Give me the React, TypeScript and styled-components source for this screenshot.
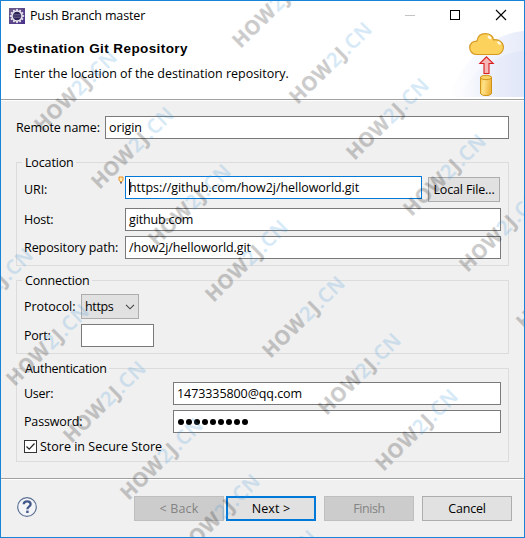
import React from 'react';
import styled, { createGlobalStyle } from 'styled-components';

const GlobalStyle = createGlobalStyle`
  * { box-sizing: border-box; }
  body { margin: 0; overflow: hidden; }
`;

const Dialog = styled.div`
  position: relative;
  display: flex;
  flex-direction: column;
  width: 525px;
  height: 538px;
  overflow: hidden;
  border: 1px solid #1883d7;
  background: #f0f0f0;
  color: #000;
  font: 12.5px/17px 'Open Sans', sans-serif;
`;

const Text = styled.span<{ $ls?: number }>`
  letter-spacing: ${(p) => p.$ls ?? -0.08}px;
  white-space: nowrap;
`;

const TitleBar = styled.header`
  display: flex;
  align-items: center;
  height: 29px;
  padding-left: 8px;
  background: #fff;
`;

const TitleText = styled(Text)`
  flex: 1;
  margin-left: 5px;
`;

const WindowControls = styled.div`
  display: flex;
  width: 138px;
  height: 29px;
`;

const Banner = styled.div`
  display: flex;
  justify-content: space-between;
  height: 70px;
  background: #fff;
  border-bottom: 1px solid #a0a0a0;
  box-shadow: 0 1px 0 #fff;
`;

const BannerCopy = styled.div`
  padding: 10px 0 0 6px;
`;

const BannerTitle = styled.h1`
  margin: 0;
  font: bold 13.5px/17px 'Liberation Sans', sans-serif;
  letter-spacing: 0.41px;
  white-space: nowrap;
`;

const BannerHint = styled.p`
  margin: 8px 0 0 7px;
`;

const Body = styled.main`
  display: flex;
  flex-direction: column;
  height: 379px;
  padding: 16px 15px 0;
`;

const RemoteRow = styled.div`
  display: grid;
  grid-template-columns: 89px 1fr;
  align-items: center;
`;

const Group = styled.fieldset<{ $top: number; $height: number }>`
  display: flex;
  flex-direction: column;
  gap: 5px;
  min-width: 0;
  margin: ${(p) => p.$top}px 0 0;
  height: ${(p) => p.$height}px;
  padding: 5px 7px 0;
  border: 1px solid #dcdcdc;
`;

const Legend = styled.legend`
  height: 17px;
  margin-left: -2px;
  padding: 0 2px 0 3px;
`;

const Row = styled.div<{ $label: number; $top?: number }>`
  display: grid;
  grid-template-columns: ${(p) => p.$label}px 1fr auto;
  align-items: start;
  height: 23px;
  margin-top: ${(p) => p.$top ?? 0}px;
`;

const Label = styled(Text)<{ $drop?: number }>`
  padding-top: ${(p) => p.$drop ?? 3}px;
`;

const Field = styled.div<{ $focused?: boolean; $width?: number }>`
  display: flex;
  align-items: center;
  width: ${(p) => (p.$width ? `${p.$width}px` : 'auto')};
  height: 23px;
  padding: 0 3px 1px;
  background: #fff;
  border: 1px solid ${(p) => (p.$focused ? '#0078d7' : '#7a7a7a')};
`;

const UriCell = styled.div`
  position: relative;
`;

const Hint = styled.svg`
  position: absolute;
  left: -7px;
  top: 0;
`;

const Caret = styled.span`
  width: 1px;
  height: 16px;
  margin-right: -1px;
  background: #000;
`;

const Button = styled.button<{ $width: number; $primary?: boolean }>`
  display: flex;
  align-items: center;
  justify-content: center;
  width: ${(p) => p.$width}px;
  height: 25px;
  padding: 0;
  font: inherit;
  color: #000;
  background: #e1e1e1;
  border: ${(p) => (p.$primary ? '2px solid #0078d7' : '1px solid #adadad')};
  &:disabled {
    color: #838383;
    background: #ccc;
    border-color: #bfbfbf;
  }
`;

const LocalButton = styled(Button)`
  margin: 1px 1px 0 6px;
`;

const Combo = styled.div`
  display: flex;
  align-items: center;
  justify-content: space-between;
  width: 58px;
  height: 25px;
  padding: 0 3px 0 3px;
  background: #e1e1e1;
  border: 1px solid #adadad;
`;

const Dots = styled.div`
  display: flex;
  gap: 2px;
  padding: 1px 0 0 1px;
`;

const Dot = styled.i`
  width: 6px;
  height: 6px;
  border-radius: 50%;
  background: #000;
`;

const CheckRow = styled.label`
  display: flex;
  align-items: center;
  gap: 3px;
  height: 17px;
`;

const CheckBox = styled.span`
  display: flex;
  width: 13px;
  height: 13px;
  background: #fff;
  border: 1px solid #333;
`;

const Footer = styled.footer`
  display: flex;
  align-items: flex-start;
  height: 59px;
  padding: 17px 12px 0 15px;
  border-top: 1px solid #a0a0a0;
  box-shadow: inset 0 1px 0 #fff;
`;

const Buttons = styled.div`
  display: flex;
  flex: 1;
  justify-content: flex-end;
  gap: 8px;
`;

const Pair = styled.div`
  display: flex;
  gap: 2px;
`;

const Overlay = styled.svg`
  position: absolute;
  inset: -1px;
  pointer-events: none;
`;

const Mark = styled.text`
  font: bold 20px 'Open Sans', sans-serif;
  fill: #000;
  stroke: #000;
  stroke-width: 0.3px;
  opacity: 0.2;
`;

const Blue = styled.tspan`
  font-weight: 600;
  fill: #3a94d8;
  stroke: #3a94d8;
`;

const MARKS: [number, number][] = [
  [240, 48], [297, 104], [354, 160], [411, 216], [467, 272], [524, 329],
  [42, 132], [99, 189], [156, 246], [213, 302], [270, 358], [326, 415], [383, 471],
  [-42, 330], [14, 386], [71, 443], [128, 500], [185, 556], [242, 612],
];

function Watermarks() {
  return (
    <Overlay width="525" height="538" viewBox="0 0 525 538">
      {MARKS.map(([x, y]) => (
        <Mark key={`${x}-${y}`} transform={`translate(${x + 0.5} ${y + 1}) rotate(-44.5)`} textLength="106">
          HOW<Blue>2</Blue>J<Blue>.CN</Blue>
        </Mark>
      ))}
    </Overlay>
  );
}

function AppIcon() {
  const teeth = Array.from({ length: 12 }, (_, i) => i * 30);
  return (
    <svg width="16" height="16" viewBox="0 0 16 16">
      <defs>
        <linearGradient id="tile" x2="1" y2="1">
          <stop offset="0" stopColor="#6c5c88" />
          <stop offset="1" stopColor="#49308a" />
        </linearGradient>
      </defs>
      <rect width="16" height="16" fill="url(#tile)" />
      {teeth.map((a) => (
        <rect key={a} x="7.1" y="0.9" width="1.8" height="3" fill="#e4e0ea" transform={`rotate(${a} 8 8)`} />
      ))}
      <circle cx="8" cy="8" r="5" fill="#2c2255" stroke="#e8e5ee" strokeWidth="1.5" />
      <path d="M4.2 6.5h7.6M3.8 8h8.4M4.2 9.5h7.6" stroke="#75699a" strokeWidth=".7" />
    </svg>
  );
}

function WindowButtons() {
  return (
    <WindowControls>
      <svg width="138" height="29" viewBox="386 1 138 29" fill="none" stroke="#000" shapeRendering="crispEdges">
        <path d="M405 15.5h10" stroke="#c4c4c4" />
        <rect x="450.5" y="10.5" width="9" height="9" />
        <path d="M496 10l10 10M506 10l-10 10" shapeRendering="auto" strokeWidth="1.1" />
      </svg>
    </WindowControls>
  );
}

function PushArt() {
  return (
    <svg width="78" height="69" viewBox="446 30 78 69">
      <defs>
        <linearGradient id="sky" x2="1">
          <stop offset="0" stopColor="#e4e9fa" stopOpacity="0" />
          <stop offset="1" stopColor="#dfe5f8" />
        </linearGradient>
        <linearGradient id="gold" x2="1" y2=".2">
          <stop offset="0" stopColor="#f6c648" />
          <stop offset=".35" stopColor="#ffe28a" />
          <stop offset="1" stopColor="#efb43a" />
        </linearGradient>
      </defs>
      <path d="M448 97C462 61 492 33 524 31V97Z" fill="url(#sky)" opacity=".75" />
      <path d="M458 97C474 68 498 53 524 51V97Z" fill="url(#sky)" opacity=".75" />
      <path
        d="M476 54.5a6.800 6.800 0 0 1-6.300-7c0-4 3.200-6.600 7.300-6.400.6-4.600 3.900-7.400 8.200-7.400 4.600 0 7.600 2.500 8.300 6.100 5.500-.8 9.900 2.500 9.900 7.400 0 4.300-2.800 7.300-6.800 7.300Z"
        fill="#fdd25c" stroke="#d69a22" strokeWidth="1.200"
      />
      <ellipse cx="489.500" cy="37.500" rx="2.200" ry="1.400" transform="rotate(40 489.500 37.500)" fill="#fff" opacity=".85" />
      <ellipse cx="499" cy="43" rx="2.200" ry="1.300" transform="rotate(40 499 43)" fill="#fff" opacity=".85" />
      <path d="M486.500 56.800l6.700 6.700H489v10h-5v-10h-4.200Z" fill="#f6b6b6" stroke="#d81f1f" strokeWidth="1.100" />
      <path d="M480.500 77v16c0 3.400 11 3.400 11 0V77Z" fill="url(#gold)" stroke="#cf9418" />
      <ellipse cx="486" cy="77.500" rx="5.500" ry="2.200" fill="#f9d368" stroke="#cf9418" />
    </svg>
  );
}

function HelpIcon() {
  return (
    <svg width="22" height="22" viewBox="0 0 22 22" fill="none">
      <circle cx="11" cy="11" r="9.300" fill="#f3f4f7" stroke="#5d7195" strokeWidth="1.200" />
      <path d="M7.700 8.300c.1-2 1.400-3 3.400-3 2.100 0 3.500 1.100 3.500 2.900 0 2.500-3.200 2.500-3.200 5" stroke="#44598b" strokeWidth="2.300" />
      <rect x="10.200" y="14.600" width="2.400" height="2.400" fill="#44598b" />
    </svg>
  );
}

export default function App() {
  return (
    <Dialog>
      <GlobalStyle />
      <TitleBar>
        <AppIcon />
        <TitleText $ls={-0.15}>Push Branch master</TitleText>
        <WindowButtons />
      </TitleBar>
      <Banner>
        <BannerCopy>
          <BannerTitle>Destination Git Repository</BannerTitle>
          <BannerHint>
            <Text $ls={-0.02}>Enter the location of the destination repository.</Text>
          </BannerHint>
        </BannerCopy>
        <PushArt />
      </Banner>
      <Body>
        <RemoteRow>
          <Text $ls={-0.1}>Remote name:</Text>
          <Field><Text>origin</Text></Field>
        </RemoteRow>

        <Group $top={15} $height={112}>
          <Legend><Text $ls={-0.15}>Location</Text></Legend>
          <Row $label={101}>
            <Label $drop={5}>URI:</Label>
            <UriCell>
              <Hint width="6" height="9" viewBox="0 0 6 9">
                <path d="M1 1h4v3L4 5.500H2L1 4Z" fill="#ffe9a8" stroke="#e8912c" />
                <path d="M2 6.500h2M2.500 7.500h1" stroke="#6b7280" />
              </Hint>
              <Field $focused>
                <Caret />
                <Text $ls={-0.05}>https://github.com/how2j/helloworld.git</Text>
              </Field>
            </UriCell>
            <LocalButton $width={72}><Text $ls={-0.15}>Local File...</Text></LocalButton>
          </Row>
          <Row $label={101} $top={4}>
            <Label $ls={-0.25}>Host:</Label>
            <Field><Text $ls={-0.15}>github.com</Text></Field>
          </Row>
          <Row $label={101}>
            <Label>Repository path:</Label>
            <Field><Text>/how2j/helloworld.git</Text></Field>
          </Row>
        </Group>

        <Group $top={6} $height={82}>
          <Legend><Text $ls={-0.2}>Connection</Text></Legend>
          <Row $label={57}>
            <Label $drop={4}>Protocol:</Label>
            <Combo>
              <Text $ls={-0.35}>https</Text>
              <svg width="10" height="6" viewBox="0 0 10 6" fill="none" stroke="#444" strokeWidth="1.100">
                <path d="M1 .8l4 4 4-4" />
              </svg>
            </Combo>
          </Row>
          <Row $label={57} $top={2}>
            <Label $ls={-0.3}>Port:</Label>
            <Field $width={73} />
          </Row>
        </Group>

        <Group $top={6} $height={102}>
          <Legend><Text $ls={-0.3}>Authentication</Text></Legend>
          <Row $label={149}>
            <Label $ls={-0.25}>User:</Label>
            <Field><Text>1473335800@qq.com</Text></Field>
          </Row>
          <Row $label={149}>
            <Label $ls={-0.15}>Password:</Label>
            <Field>
              <Dots>{Array.from({ length: 9 }, (_, i) => <Dot key={i} />)}</Dots>
            </Field>
          </Row>
          <CheckRow>
            <CheckBox>
              <svg width="11" height="11" viewBox="0 0 11 11" fill="none" stroke="#222" strokeWidth="1.200">
                <path d="M1.500 5.500l2.700 2.700 5.300-5.700" />
              </svg>
            </CheckBox>
            <Text $ls={0}>Store in Secure Store</Text>
          </CheckRow>
        </Group>
      </Body>
      <Footer>
        <HelpIcon />
        <Buttons>
          <Pair>
            <Button $width={90} disabled><Text $ls={0.15}>&lt; Back</Text></Button>
            <Button $width={90} $primary><Text $ls={0.15}>Next &gt;</Text></Button>
          </Pair>
          <Button $width={90} disabled><Text $ls={-0.4}>Finish</Text></Button>
          <Button $width={90}><Text $ls={-0.2}>Cancel</Text></Button>
        </Buttons>
      </Footer>
      <Watermarks />
    </Dialog>
  );
}
